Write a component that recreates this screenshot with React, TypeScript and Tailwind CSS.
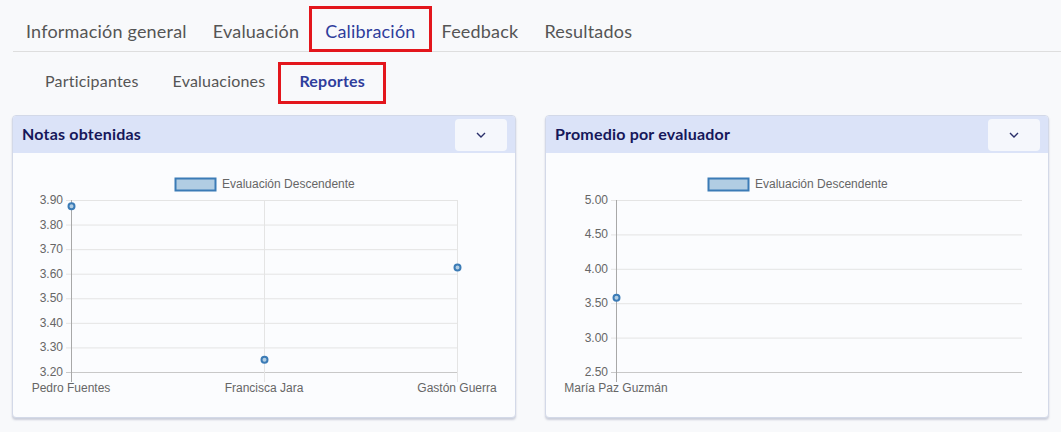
import React from 'react';

type Point = { label: string; value: number };

type ChartProps = {
  ticks: number[];
  min: number;
  max: number;
  points: Point[];
  axisX: number;
  right: number;
  labelX: number;
  vGrid: boolean;
};

const TOP = 47;
const BOTTOM = 219;

const LineChart: React.FC<ChartProps> = ({ ticks, min, max, points, axisX, right, labelX, vGrid }) => {
  const y = (v: number) => BOTTOM - ((v - min) / (max - min)) * (BOTTOM - TOP);
  const step = points.length > 1 ? (right - axisX) / (points.length - 1) : 0;
  const font = '"Liberation Sans", Arial, sans-serif';

  return (
    <svg width="502" height="264" className="block">
      {/* legend */}
      <rect x="162.5" y="25.5" width="40" height="12" fill="#b1cde3" stroke="#3b7bb6" strokeWidth="2" />
      <text x="209" y="35" fontSize="12" fill="#666" fontFamily={font}>
        Evaluación Descendente
      </text>

      {/* horizontal grid + y ticks */}
      {ticks.map((t) => (
        <g key={t}>
          <line x1={axisX - 5} x2={right} y1={y(t) + 0.5} y2={y(t) + 0.5} stroke={t === min ? '#c8c8c8' : '#e4e4e4'} />
          <text x={labelX} y={y(t) + 4} fontSize="12" fill="#666" textAnchor="end" fontFamily={font}>
            {t.toFixed(2)}
          </text>
        </g>
      ))}

      {/* vertical grid + x labels */}
      {points.map((p, i) => {
        const x = axisX + i * step;
        return (
          <g key={p.label}>
            {(vGrid || i === 0) && (
              <line x1={x + 0.5} x2={x + 0.5} y1={TOP} y2={BOTTOM + 10} stroke={i === 0 ? '#a8a8a8' : '#e4e4e4'} />
            )}
            <text x={x} y={239} fontSize="12" fill="#666" textAnchor="middle" fontFamily={font}>
              {p.label}
            </text>
          </g>
        );
      })}

      {/* points */}
      {points.map((p, i) => (
        <circle key={p.label} cx={axisX + i * step + 0.5} cy={y(p.value)} r="3" fill="#b1cde3" stroke="#3b7bb6" strokeWidth="2" />
      ))}
    </svg>
  );
};

const Card: React.FC<{ title: string; children: React.ReactNode }> = ({ title, children }) => (
  <div className="rounded-[4px] border border-[#d3d9e8] bg-[#fbfcfe] shadow-[0_2px_2px_rgba(120,130,160,0.35)] overflow-hidden">
    <div className="flex items-center justify-between h-[37px] bg-[#dbe3f8] pl-[9px] pr-[8px]">
      <h3 className="text-[16px] tracking-[0.2px] font-bold text-[#16175a] font-['Lato',sans-serif] pb-[2px]">{title}</h3>
      <button className="w-[52px] h-[32px] rounded-[4px] bg-[#f5f7fc] flex items-center justify-center">
        <svg width="10" height="6" viewBox="0 0 10 6">
          <path d="M1 1l4 4 4-4" fill="none" stroke="#2a2f6a" strokeWidth="1.4" />
        </svg>
      </button>
    </div>
    {children}
  </div>
);

export default function App() {
  const tabs = ['Información general', 'Evaluación', 'Calibración', 'Feedback', 'Resultados'];
  const subTabs = ['Participantes', 'Evaluaciones', 'Reportes'];

  return (
    <div className="w-[1061px] h-[432px] bg-[#f8f9fb] font-['Lato',sans-serif]">
      <nav className="flex pt-[9px] pb-[2px] border-b border-[#dedede] ml-[13px]">
        {tabs.map((t) => (
          <a
            key={t}
            className={
              'px-[13px] pt-[12px] pb-[8px] text-[18px] tracking-[0.2px] leading-[20px] ' +
              (t === 'Calibración' ? 'text-[#2f3d9c] outline-[3px] outline-solid outline-[#e3161c]' : 'text-[#555]')
            }
          >
            {t}
          </a>
        ))}
      </nav>

      <div className="flex pl-[28px] pt-[14px]">
        {subTabs.map((t) => (
          <a
            key={t}
            className={
              'px-[17px] pt-[5px] pb-[9px] text-[16px] tracking-[0.2px] leading-[20px] ' +
              (t === 'Reportes'
                ? 'font-bold text-[#2f3d9c] outline-[3px] outline-solid outline-[#e3161c] outline-offset-[1px]'
                : 'text-[#555]')
            }
          >
            {t}
          </a>
        ))}
      </div>

      <div className="grid grid-cols-[504px_504px] gap-[29px] px-[12px] mt-[15px]">
        <Card title="Notas obtenidas">
          <LineChart
            ticks={[3.2, 3.3, 3.4, 3.5, 3.6, 3.7, 3.8, 3.9]}
            min={3.2}
            max={3.9}
            axisX={58}
            right={444}
            labelX={50}
            vGrid
            points={[
              { label: 'Pedro Fuentes', value: 3.875 },
              { label: 'Francisca Jara', value: 3.25 },
              { label: 'Gastón Guerra', value: 3.625 },
            ]}
          />
        </Card>
        <Card title="Promedio por evaluador">
          <LineChart
            ticks={[2.5, 3, 3.5, 4, 4.5, 5]}
            min={2.5}
            max={5}
            axisX={70}
            right={476}
            labelX={62}
            vGrid={false}
            points={[{ label: 'María Paz Guzmán', value: 3.58 }]}
          />
        </Card>
      </div>
    </div>
  );
}
